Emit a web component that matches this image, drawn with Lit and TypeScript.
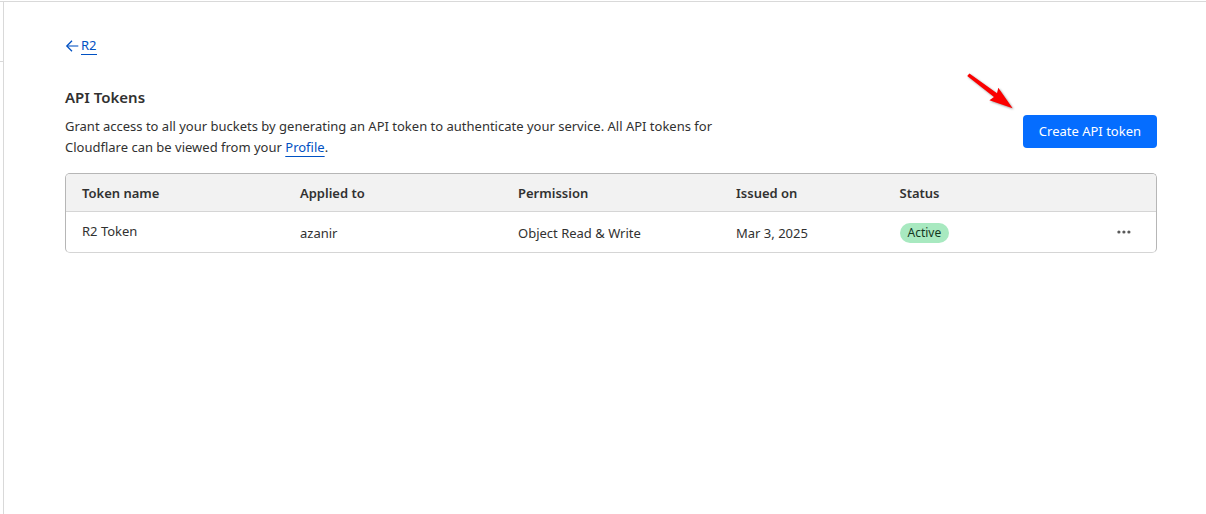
import { LitElement, html, css } from "lit";
import { customElement, property } from "lit/decorators.js";

interface Token {
  name: string;
  appliedTo: string;
  permission: string;
  issuedOn: string;
  status: string;
}

@customElement("token-table")
class TokenTable extends LitElement {
  @property({ attribute: false }) tokens: Token[] = [];

  static styles = css`
    :host {
      display: block;
      border: 1px solid #b6b6b6;
      border-bottom-color: #d5d5d5;
      border-radius: 5px;
      overflow: hidden;
    }
    .table {
      width: 100%;
      table-layout: fixed;
      border-collapse: separate;
      border-spacing: 0;
    }
    .wide {
      width: 20%;
    }
    .narrow {
      width: 15%;
    }
    .head {
      padding: 9px 16px 7px;
      text-align: left;
      font-weight: 600;
      background: #f2f2f2;
      border-bottom: 1px solid #d5d5d5;
    }
    .cell {
      padding: 11px 16px 8px;
      text-align: left;
      font-weight: 400;
    }
    .name {
      padding: 9px 16px 10px;
    }
    .badge {
      display: block;
      width: max-content;
      padding: 0 8px;
      border-radius: 10px;
      background: #a8e9c0;
      color: #14371f;
      font-size: 12px;
      line-height: 20px;
    }
    .status {
      padding: 11px 16px 9px;
    }
    .actions {
      padding: 0 16px;
    }
    .more {
      display: flex;
      margin-left: auto;
      padding: 8px;
      border: 0;
      background: none;
      color: #595959;
      cursor: pointer;
    }
  `;

  render() {
    return html`
      <table class="table">
        <colgroup>
          <col class="wide" />
          <col class="wide" />
          <col class="wide" />
          <col class="narrow" />
          <col class="narrow" />
          <col />
        </colgroup>
        <thead>
          <tr>
            <th class="head" scope="col">Token name</th>
            <th class="head" scope="col">Applied to</th>
            <th class="head" scope="col">Permission</th>
            <th class="head" scope="col">Issued on</th>
            <th class="head" scope="col">Status</th>
            <td class="head"></td>
          </tr>
        </thead>
        <tbody>
          ${this.tokens.map(
            (token) => html`
              <tr>
                <th class="cell name" scope="row">${token.name}</th>
                <td class="cell">${token.appliedTo}</td>
                <td class="cell">${token.permission}</td>
                <td class="cell">${token.issuedOn}</td>
                <td class="status"><span class="badge">${token.status}</span></td>
                <td class="actions">
                  <button class="more" type="button" aria-label="Token actions">
                    <svg width="16" height="16" viewBox="0 0 16 16" fill="currentColor" aria-hidden="true">
                      <circle cx="2.9" cy="8" r="1.6" />
                      <circle cx="7.9" cy="8" r="1.6" />
                      <circle cx="12.9" cy="8" r="1.6" />
                    </svg>
                  </button>
                </td>
              </tr>
            `
          )}
        </tbody>
      </table>
    `;
  }
}

@customElement("app-root")
class AppRoot extends LitElement {
  private tokens: Token[] = [
    {
      name: "R2 Token",
      appliedTo: "azanir",
      permission: "Object Read & Write",
      issuedOn: "Mar 3, 2025",
      status: "Active",
    },
  ];

  static styles = css`
    :host {
      display: block;
      font-family: "Segoe UI", "Noto Sans", "Open Sans", sans-serif;
      font-size: 13px;
      line-height: 21px;
      color: #313131;
      background: #fff;
    }
    .shell {
      display: flex;
      min-height: 100vh;
      box-sizing: border-box;
      padding-top: 1px;
    }
    .rail {
      flex: none;
      width: 3px;
      border-top: 1px solid #d9d9d9;
      border-right: 1px solid #d9d9d9;
    }
    .rail-head {
      height: 59px;
      border-bottom: 1px solid #d9d9d9;
    }
    .main {
      flex: 1;
      min-width: 0;
      border-top: 1px solid #d9d9d9;
      padding: 34px 49px 48px 61px;
    }
    .link {
      color: #0051c3;
      text-decoration: underline 1px;
      text-underline-offset: 4px;
    }
    .back {
      display: flex;
      align-items: center;
      gap: 2px;
      width: max-content;
      color: #0051c3;
      text-decoration: none;
    }
    .back-text {
      line-height: 18px;
      border-bottom: 1px solid #0051c3;
    }
    .intro {
      display: flex;
      align-items: flex-end;
      justify-content: space-between;
      gap: 24px;
      margin: 32px 0 15px;
    }
    .title {
      margin: 0 0 8px;
      font-size: 15px;
      line-height: 21px;
      font-weight: 600;
    }
    .text {
      margin: 0;
      max-width: 680px;
    }
    .create-area {
      position: relative;
      flex: none;
      margin-bottom: 10px;
    }
    .create {
      display: block;
      height: 33px;
      padding: 0 16px;
      border: 0;
      border-radius: 4px;
      background: #056dff;
      color: #fff;
      font: inherit;
      cursor: pointer;
    }
    .pointer {
      position: absolute;
      right: 100%;
      bottom: 100%;
      margin: 0 8px 4px 0;
      filter: drop-shadow(1px 1px 1px rgba(0, 0, 0, 0.4));
    }
  `;

  render() {
    return html`
      <div class="shell">
        <div class="rail"><div class="rail-head"></div></div>
        <main class="main">
          <a class="back" href="#r2">
            <svg width="14" height="14" viewBox="0 0 14 14" fill="none" stroke="currentColor" aria-hidden="true">
              <path d="M2 7H13.3" opacity="0.7" stroke-width="1.5" />
              <path d="M7 1.8L1.8 7L7 12.2" stroke-width="1.3" />
            </svg>
            <span class="back-text">R2</span>
          </a>
          <section class="intro">
            <div>
              <h1 class="title">API Tokens</h1>
              <p class="text">
                Grant access to all your buckets by generating an API token to authenticate your service. All API tokens
                for Cloudflare can be viewed from your <a class="link" href="#profile">Profile</a>.
              </p>
            </div>
            <div class="create-area">
              <svg class="pointer" width="48" height="38" viewBox="0 0 48 38" fill="#fb0000" aria-hidden="true">
                <path d="M2.4.6L.2 3L27 24L22.4 27.2L45.6 35.2L31.3 14.8L30 20.2Z" />
              </svg>
              <button class="create" type="button">Create API token</button>
            </div>
          </section>
          <token-table .tokens=${this.tokens}></token-table>
        </main>
      </div>
    `;
  }
}
